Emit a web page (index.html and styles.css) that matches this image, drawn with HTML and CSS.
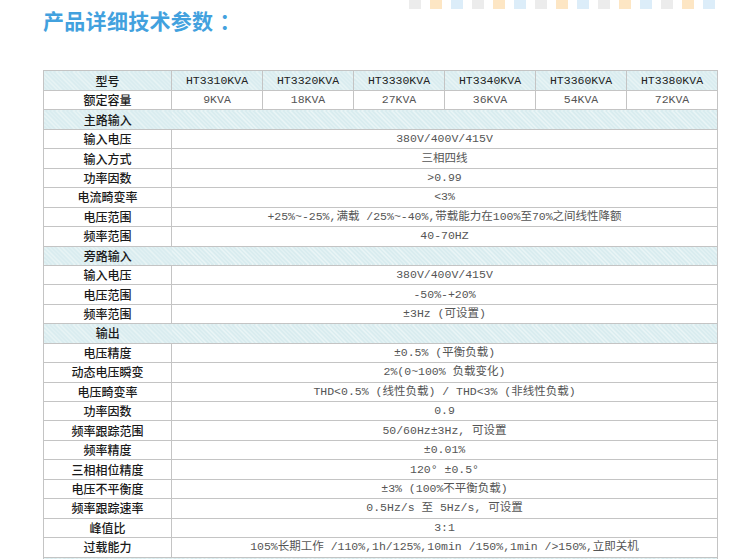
FILE: index.html
```html
<!DOCTYPE html>
<html lang="zh-CN">
<head>
<meta charset="utf-8">
<title>产品详细技术参数</title>
<link rel="stylesheet" href="styles.css">
</head>
<body>
<div class="page">
  <div class="head">
    <h1 class="title">产品详细技术参数<span class="colon">：</span></h1>
    <div class="dots">
      <span class="dot g"></span><span class="dot o"></span><span class="dot b"></span>
      <span class="dot g"></span><span class="dot o"></span><span class="dot b"></span>
      <span class="dot g"></span><span class="dot o"></span><span class="dot b"></span>
      <span class="dot g"></span><span class="dot o"></span><span class="dot b"></span>
      <span class="dot g"></span><span class="dot o"></span><span class="dot b"></span>
    </div>
  </div>
  <table class="spec">
    <colgroup>
      <col class="c-label"><col class="c-m"><col class="c-m"><col class="c-m"><col class="c-m"><col class="c-m"><col class="c-m">
    </colgroup>
    <tr class="hatch hdr">
      <td class="lbl">型号</td>
      <td class="val">HT3310KVA</td><td class="val">HT3320KVA</td><td class="val">HT3330KVA</td>
      <td class="val">HT3340KVA</td><td class="val">HT3360KVA</td><td class="val">HT3380KVA</td>
    </tr>
    <tr>
      <td class="lbl">额定容量</td>
      <td class="val">9KVA</td><td class="val">18KVA</td><td class="val">27KVA</td>
      <td class="val">36KVA</td><td class="val">54KVA</td><td class="val">72KVA</td>
    </tr>
    <tr class="hatch sec"><td class="lbl">主路输入</td><td colspan="6"></td></tr>
    <tr><td class="lbl">输入电压</td><td class="val" colspan="6">380V/400V/415V</td></tr>
    <tr><td class="lbl">输入方式</td><td class="val" colspan="6">三相四线</td></tr>
    <tr><td class="lbl">功率因数</td><td class="val" colspan="6">&gt;0.99</td></tr>
    <tr><td class="lbl">电流畸变率</td><td class="val" colspan="6">&lt;3%</td></tr>
    <tr><td class="lbl">电压范围</td><td class="val" colspan="6">+25%~-25%,满载 /25%~-40%,带载能力在100%至70%之间线性降额</td></tr>
    <tr><td class="lbl">频率范围</td><td class="val" colspan="6">40-70HZ</td></tr>
    <tr class="hatch sec"><td class="lbl">旁路输入</td><td colspan="6"></td></tr>
    <tr><td class="lbl">输入电压</td><td class="val" colspan="6">380V/400V/415V</td></tr>
    <tr><td class="lbl">电压范围</td><td class="val" colspan="6">-50%-+20%</td></tr>
    <tr><td class="lbl">频率范围</td><td class="val" colspan="6">±3Hz (可设置)</td></tr>
    <tr class="hatch sec"><td class="lbl">输出</td><td colspan="6"></td></tr>
    <tr><td class="lbl">电压精度</td><td class="val" colspan="6">±0.5% (平衡负载)</td></tr>
    <tr><td class="lbl">动态电压瞬变</td><td class="val" colspan="6">2%(0~100% 负载变化)</td></tr>
    <tr><td class="lbl">电压畸变率</td><td class="val" colspan="6">THD&lt;0.5% (线性负载) / THD&lt;3% (非线性负载)</td></tr>
    <tr><td class="lbl">功率因数</td><td class="val" colspan="6">0.9</td></tr>
    <tr><td class="lbl">频率跟踪范围</td><td class="val" colspan="6">50/60Hz±3Hz, 可设置</td></tr>
    <tr><td class="lbl">频率精度</td><td class="val" colspan="6">±0.01%</td></tr>
    <tr><td class="lbl">三相相位精度</td><td class="val" colspan="6">120° ±0.5°</td></tr>
    <tr><td class="lbl">电压不平衡度</td><td class="val" colspan="6">±3% (100%不平衡负载)</td></tr>
    <tr><td class="lbl">频率跟踪速率</td><td class="val" colspan="6">0.5Hz/s 至 5Hz/s, 可设置</td></tr>
    <tr><td class="lbl">峰值比</td><td class="val" colspan="6">3:1</td></tr>
    <tr><td class="lbl">过载能力</td><td class="val" colspan="6">105%长期工作 /110%,1h/125%,10min /150%,1min /&gt;150%,立即关机</td></tr>
    <tr class="hatch sec"><td class="lbl"></td><td colspan="6"></td></tr>
  </table>
</div>
</body>
</html>
```

FILE: styles.css
```css
html, body {
  margin: 0;
  padding: 0;
  background: #ffffff;
}

.page {
  padding-left: 43px;
  width: 672px;
  font-family: "Liberation Mono", "Noto Sans CJK SC", monospace;
}

.head {
  display: flex;
  justify-content: space-between;
  align-items: flex-start;
  height: 70px;
}

.title {
  margin: 7px 0 0 0;
  font-family: "Noto Sans CJK SC", "Noto Sans", sans-serif;
  font-size: 21px;
  line-height: 26px;
  font-weight: 700;
  color: #42a1de;
  letter-spacing: 0.3px;
}

.colon {
  margin-left: 6px;
}

.dots {
  display: flex;
  gap: 9px;
}

.dot {
  width: 12px;
  height: 9px;
  display: block;
}
.dot.g { background: #ececec; }
.dot.o { background: #fde6c4; }
.dot.b { background: #dcedf9; }

.spec {
  border-collapse: collapse;
  table-layout: fixed;
  width: 672px;
  font-size: 12px;
}

.c-label { width: 128px; }
.c-m { width: 91px; }

.spec td {
  border: 1px solid #c4c4c4;
  height: 18.45px;
  padding: 0;
  text-align: center;
  vertical-align: middle;
  line-height: 14px;
  white-space: nowrap;
  overflow: hidden;
}

.spec .hdr td {
  height: 19px;
}

.lbl {
  font-family: "Noto Sans CJK SC", sans-serif;
  font-weight: 500;
  color: #1a1a1a;
  font-size: 12px;
}

.val {
  color: #555555;
  font-family: "Liberation Mono", "Noto Sans CJK SC", monospace;
  font-size: 11.5px;
}

.hdr .val {
  color: #222222;
  font-weight: 400;
}

.hatch td {
  background-color: #d9ecef;
  background-image: repeating-linear-gradient(45deg, #eaf5f6 0px, #eaf5f6 1px, transparent 1px, transparent 3px);
}

.sec td + td {
  border-left: none;
}
.sec td.lbl {
  border-right: none;
}
```
